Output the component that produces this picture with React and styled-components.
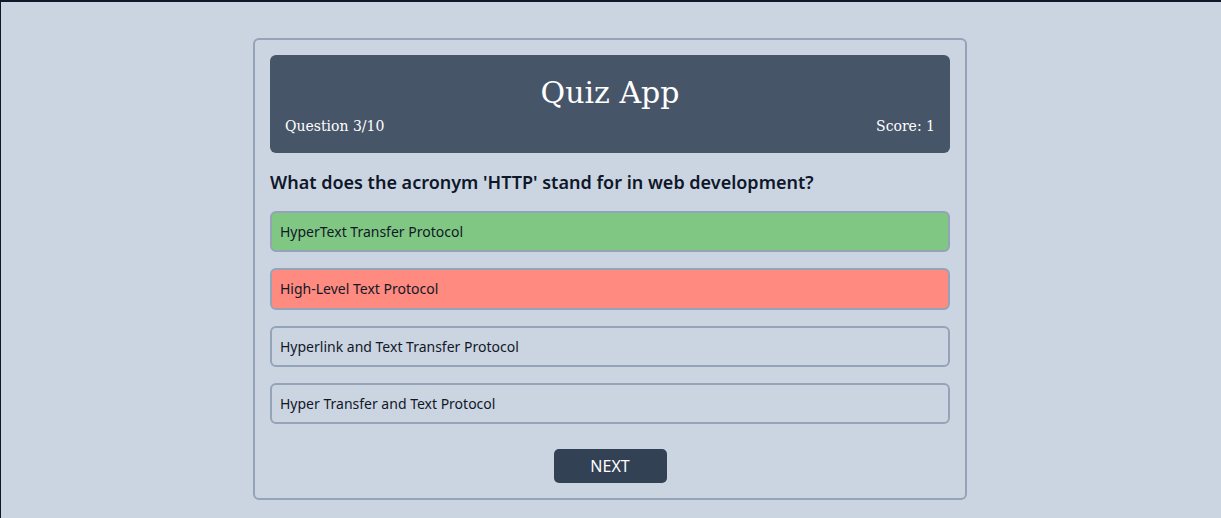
import React, { useState } from 'react';
import styled, { createGlobalStyle } from 'styled-components';

const GlobalStyle = createGlobalStyle`
  html, body {
    margin: 0;
    padding: 0;
    background: #cbd5e1;
  }
`;

const Page = styled.div`
  box-sizing: border-box;
  min-height: 100vh;
  background: #cbd5e1;
  box-shadow: inset 0 2px 0 #0f172a, inset 1px 0 0 #0f172a;
  padding-top: 38px;
  padding-right: 1px;
  display: flex;
  justify-content: center;
  align-items: flex-start;
`;

const Card = styled.div`
  box-sizing: border-box;
  width: 714px;
  border: 2px solid #94a3b8;
  border-radius: 6px;
  padding: 15px;
  display: flex;
  flex-direction: column;
  font-family: "Noto Sans", "Open Sans", sans-serif;
`;

const Header = styled.header`
  background: #475569;
  border-radius: 6px;
  padding: 16px 15px;
  color: #ffffff;
  font-family: "DejaVu Serif", "Liberation Serif", serif;
`;

const Title = styled.h1`
  margin: 0;
  text-align: center;
  font-weight: 400;
  font-size: 30px;
  line-height: 44px;
`;

const Meta = styled.div`
  display: flex;
  justify-content: space-between;
  font-size: 14px;
  line-height: 22px;
`;

const Question = styled.h2`
  margin: 16px 0 15px;
  font-size: 18px;
  font-weight: 600;
  line-height: 27px;
  color: #0f172a;
`;

const Options = styled.div`
  display: flex;
  flex-direction: column;
  gap: 16px;
`;

const Option = styled.button`
  box-sizing: border-box;
  width: 100%;
  text-align: left;
  font-family: inherit;
  font-size: 14px;
  line-height: 21.33px;
  color: #111827;
  padding: 8px 8px;
  border: 2px solid #94a3b8;
  border-radius: 6px;
  background: ${p => (p.$state === 'correct' ? '#81c784' : p.$state === 'wrong' ? '#ff8a80' : 'transparent')};
  cursor: pointer;
`;

const Footer = styled.div`
  display: flex;
  justify-content: center;
  margin-top: 25px;
`;

const NextButton = styled.button`
  width: 113px;
  height: 34px;
  border: none;
  border-radius: 5px;
  background: #334155;
  color: #ffffff;
  font-family: inherit;
  font-size: 16px;
  text-transform: uppercase;
  cursor: pointer;
`;

const options = [
  { text: 'HyperText Transfer Protocol', state: 'correct' },
  { text: 'High-Level Text Protocol', state: 'wrong' },
  { text: 'Hyperlink and Text Transfer Protocol' },
  { text: 'Hyper Transfer and Text Protocol' },
];

export default function App() {
  const [score] = useState(1);
  return (
    <>
      <GlobalStyle />
      <Page>
        <Card>
          <Header>
            <Title>Quiz App</Title>
            <Meta>
              <span>Question 3/10</span>
              <span>Score: {score}</span>
            </Meta>
          </Header>
          <Question>What does the acronym 'HTTP' stand for in web development?</Question>
          <Options>
            {options.map(o => (
              <Option key={o.text} $state={o.state}>{o.text}</Option>
            ))}
          </Options>
          <Footer>
            <NextButton>Next</NextButton>
          </Footer>
        </Card>
      </Page>
    </>
  );
}
